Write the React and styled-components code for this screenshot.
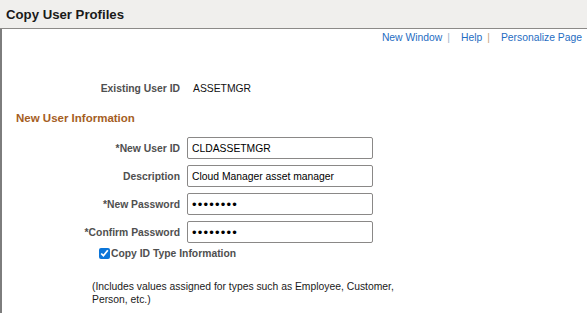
import React from 'react'
import styled, { createGlobalStyle } from 'styled-components'

const GlobalStyle = createGlobalStyle`
  html, body {
    margin: 0;
    padding: 0;
    background: #fff;
  }
  body {
    font-family: 'Liberation Sans', Arial, sans-serif;
    font-size: 10.35px;
    color: #000;
  }
`

const Header = styled.div`
  height: 28px;
  background: #f0efed;
  border-bottom: 1px solid #8c8a88;
  display: flex;
  align-items: center;
  padding-left: 6px;
  box-sizing: content-box;
`

const Title = styled.h1`
  margin: 0;
  font-size: 13.2px;
  font-weight: bold;
  color: #1a1a1a;
`

const Body = styled.div`
  border-left: 2px solid #7d7d7d;
  min-height: 284px;
  box-sizing: border-box;
`

const LinkBar = styled.div`
  display: flex;
  justify-content: flex-end;
  align-items: center;
  height: 16px;
  padding-right: 5px;
`

const Link = styled.a`
  color: #1f6dc2;
  text-decoration: none;
  cursor: pointer;
`

const Sep = styled.span`
  color: ${p => p.$tint || '#c7a682'};
  margin: 0 11px 0 5px;
`

const Form = styled.div`
  display: grid;
  grid-template-columns: 178px 186px;
  column-gap: 7px;
  row-gap: 6px;
`

const Label = styled.label`
  font-weight: bold;
  color: #4f4f4f;
  text-align: right;
  display: flex;
  align-items: center;
  justify-content: flex-end;
  height: ${p => p.$h || 22}px;
`

const StaticRow = styled.div`
  display: grid;
  grid-template-columns: 178px auto;
  column-gap: 7px;
  margin-top: 35px;
  height: 16px;
  align-items: center;
`

const Value = styled.span`
  padding-left: 6px;
  color: #111;
`

const Section = styled.h2`
  margin: 14px 0 0 14px;
  font-size: 11.5px;
  font-weight: bold;
  color: #a55e1f;
  height: 16px;
  line-height: 16px;
`

const Fields = styled(Form)`
  margin-top: 11px;
`

const Input = styled.input`
  box-sizing: border-box;
  width: 186px;
  height: 22px;
  border: 1px solid #8a8887;
  border-radius: 2px;
  padding: 0 4px;
  font-family: 'Liberation Sans', Arial, sans-serif;
  font-size: 10.35px;
  color: #000;
  background: #fff;
  outline: none;
  &[type='password'] {
    font-size: 13px;
    letter-spacing: 1.2px;
  }
`

const CheckRow = styled.label`
  display: flex;
  align-items: center;
  height: 16px;
  margin-top: 2px;
  padding-left: 97px;
  font-weight: bold;
  color: #4f4f4f;
`

const Check = styled.input`
  width: 11px;
  height: 11px;
  margin: 0 1px 0 0;
  accent-color: #0b75d9;
`

const Note = styled.p`
  margin: 19px 0 0 90px;
  width: 310px;
  line-height: 13px;
  color: #1a1a1a;
`

const fields = [
  { label: '*New User ID', value: 'CLDASSETMGR', type: 'text' },
  { label: 'Description', value: 'Cloud Manager asset manager', type: 'text' },
  { label: '*New Password', value: 'password', type: 'password' },
  { label: '*Confirm Password', value: 'password', type: 'password' },
]

const App = () => {
  return (
    <>
      <GlobalStyle />
      <Header>
        <Title>Copy User Profiles</Title>
      </Header>
      <Body>
        <LinkBar>
          <Link>New Window</Link>
          <Sep $tint="#9fb6cc">|</Sep>
          <Link>Help</Link>
          <Sep>|</Sep>
          <Link>Personalize Page</Link>
        </LinkBar>

        <StaticRow>
          <Label $h={16}>Existing User ID</Label>
          <Value>ASSETMGR</Value>
        </StaticRow>

        <Section>New User Information</Section>

        <Fields>
          {fields.map(f => (
            <React.Fragment key={f.label}>
              <Label>{f.label}</Label>
              <Input type={f.type} defaultValue={f.value} readOnly />
            </React.Fragment>
          ))}
        </Fields>

        <CheckRow>
          <Check type="checkbox" defaultChecked />
          Copy ID Type Information
        </CheckRow>

        <Note>
          (Includes values assigned for types such as Employee, Customer,
          Person, etc.)
        </Note>
      </Body>
    </>
  )
}

export default App
